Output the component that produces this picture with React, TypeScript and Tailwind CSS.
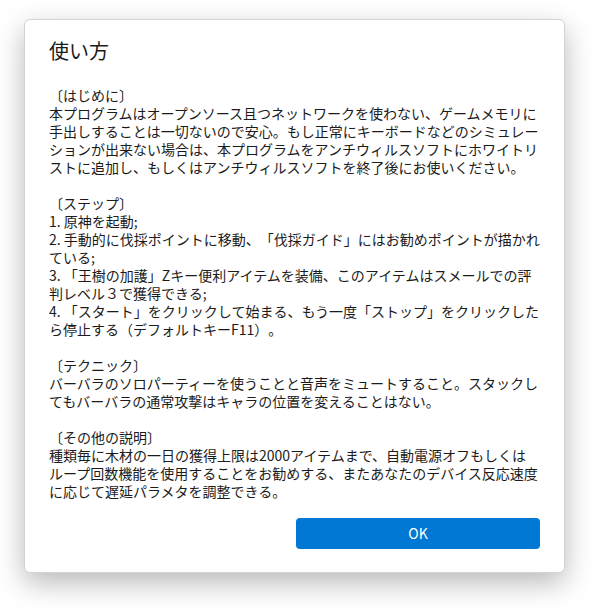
import React from 'react';

const sections: { title: string; lines: string[] }[] = [
  {
    title: '〔はじめに〕',
    lines: [
      '本プログラムはオープンソース且つネットワークを使わない、ゲームメモリに',
      '手出しすることは一切ないので安心。もし正常にキーボードなどのシミュレー',
      'ションが出来ない場合は、本プログラムをアンチウィルスソフトにホワイトリ',
      'ストに追加し、もしくはアンチウィルスソフトを終了後にお使いください。',
    ],
  },
  {
    title: '〔ステップ〕',
    lines: [
      '1. 原神を起動;',
      '2. 手動的に伐採ポイントに移動、「伐採ガイド」にはお勧めポイントが描かれ',
      'ている;',
      '3. 「王樹の加護」Zキー便利アイテムを装備、このアイテムはスメールでの評',
      '判レベル３で獲得できる;',
      '4. 「スタート」をクリックして始まる、もう一度「ストップ」をクリックした',
      'ら停止する（デフォルトキーF11）。',
    ],
  },
  {
    title: '〔テクニック〕',
    lines: [
      'バーバラのソロパーティーを使うことと音声をミュートすること。スタックし',
      'てもバーバラの通常攻撃はキャラの位置を変えることはない。',
    ],
  },
  {
    title: '〔その他の説明〕',
    lines: [
      '種類毎に木材の一日の獲得上限は2000アイテムまで、自動電源オフもしくは',
      'ループ回数機能を使用することをお勧めする、またあなたのデバイス反応速度',
      'に応じて遅延パラメタを調整できる。',
    ],
  },
];

export default function App() {
  return (
    <div
      className="w-[594px] h-[612px] bg-white pt-[19px] pl-[24px]"
      style={{ fontFamily: '"Noto Sans CJK JP", "Noto Sans", sans-serif' }}
    >
      {/* Dialog card */}
      <div className="w-[541px] h-[554px] bg-white rounded-[6px] border border-[#d4d4d4] shadow-[0_10px_28px_rgba(0,0,0,0.28)] flex flex-col px-[24px] pt-[17px] pb-[25px]">
        <h1 className="text-[20px] leading-[28px] text-[#1b1b1b] font-normal">使い方</h1>

        <div className="mt-[21px] text-[14px] leading-[18px] text-[#1b1b1b] flex flex-col gap-[18px] [text-spacing-trim:space-all]">
          {sections.map((s) => (
            <div key={s.title}>
              <div className="whitespace-nowrap">{s.title}</div>
              {s.lines.map((l) => (
                <div key={l} className="whitespace-nowrap">{l}</div>
              ))}
            </div>
          ))}
        </div>

        <div className="mt-auto flex justify-end">
          <button className="w-[244px] h-[31px] mb-[-2px] rounded-[4px] bg-[#0078d4] text-white text-[14px]">
            OK
          </button>
        </div>
      </div>
    </div>
  );
}
